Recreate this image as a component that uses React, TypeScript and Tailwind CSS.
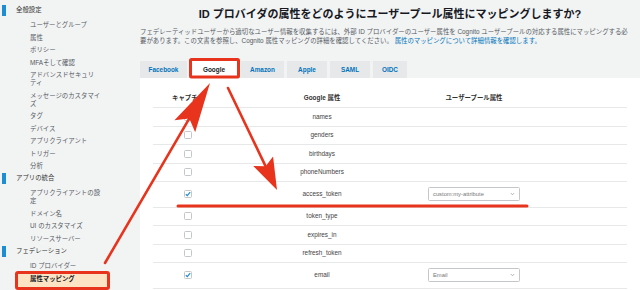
import { Fragment } from "react";

const RED = "#e8341c";

type Section = { title: string; items: { lines: string[]; active?: boolean }[] };

// Left navigation of the Cognito user pool console
const sections: Section[] = [
  {
    title: "全般設定",
    items: [
      { lines: ["ユーザーとグループ"] },
      { lines: ["属性"] },
      { lines: ["ポリシー"] },
      { lines: ["MFAそして確認"] },
      { lines: ["アドバンスドセキュリ", "ティ"] },
      { lines: ["メッセージのカスタマイ", "ズ"] },
      { lines: ["タグ"] },
      { lines: ["デバイス"] },
      { lines: ["アプリクライアント"] },
      { lines: ["トリガー"] },
      { lines: ["分析"] },
    ],
  },
  {
    title: "アプリの統合",
    items: [
      { lines: ["アプリクライアントの設", "定"] },
      { lines: ["ドメイン名"] },
      { lines: ["UI のカスタマイズ"] },
      { lines: ["リソースサーバー"] },
    ],
  },
  {
    title: "フェデレーション",
    items: [{ lines: ["ID プロバイダー"] }, { lines: ["属性マッピング"], active: true }],
  },
];

const tabs = [
  { label: "Facebook", w: "w-[47px]" },
  { label: "Google", w: "w-[48px]", active: true },
  { label: "Amazon", w: "w-[43px]" },
  { label: "Apple", w: "w-[40px]" },
  { label: "SAML", w: "w-[40px]" },
  { label: "OIDC", w: "w-[34px]" },
];

type Row = { name: string; checked?: boolean; mapped?: string };

const rows: Row[] = [
  { name: "names" },
  { name: "genders" },
  { name: "birthdays" },
  { name: "phoneNumbers" },
  { name: "access_token", checked: true, mapped: "custom:my-attribute" },
  { name: "token_type" },
  { name: "expires_in" },
  { name: "refresh_token" },
  { name: "email", checked: true, mapped: "Email" },
];

function Sidebar() {
  return (
    <aside className="w-[130px] shrink-0 pt-[4px]">
      {sections.map((s) => (
        <div key={s.title}>
          <div className="relative h-[12px] flex items-center pl-[16px] text-[6.4px] text-[#333]">
            <span className="absolute left-[2px] top-[0.5px] w-[4px] h-[11px] bg-[#1f8dd6]" />
            {s.title}
          </div>
          <div className="mt-[2.75px]">
            {s.items.map((it) =>
              it.active ? (
                <div
                  key={it.lines[0]}
                  className="ml-[16px] w-[93px] pl-[14px] pt-[2.25px] pb-[6px] leading-[8px] text-[6.4px] font-bold text-[#16191f] bg-[#fce3c3]"
                >
                  {it.lines[0]}
                </div>
              ) : (
                <div
                  key={it.lines[0]}
                  className="pl-[30px] py-[2.25px] leading-[8px] text-[6.4px] text-[#545b64]"
                >
                  {it.lines.map((l, i) => (
                    <Fragment key={i}>
                      {i > 0 && <br />}
                      {l}
                    </Fragment>
                  ))}
                </div>
              )
            )}
          </div>
        </div>
      ))}
    </aside>
  );
}

function Checkbox({ checked }: { checked?: boolean }) {
  return (
    <span className="w-[8px] h-[8px] rounded-[1.5px] border border-[#c4c7ca] bg-white flex items-center justify-center">
      {checked && (
        <svg width="6" height="6" viewBox="0 0 6 6">
          <polyline points="0.8,3.2 2.3,4.6 5.2,1.2" fill="none" stroke="#1f8dd6" strokeWidth="1.2" />
        </svg>
      )}
    </span>
  );
}

function Select({ value }: { value: string }) {
  return (
    <div className="w-[92px] h-[14px] border border-[#c4c7ca] rounded-[1.5px] bg-white flex items-center justify-between pl-[4px] pr-[4px] text-[5.8px] text-[#777]">
      <span>{value}</span>
      <svg width="5" height="4" viewBox="0 0 5 4">
        <polyline points="0.8,1 2.5,2.8 4.2,1" fill="none" stroke="#999" strokeWidth="0.7" />
      </svg>
    </div>
  );
}

function MappingTable() {
  return (
    <div className="flex-1 bg-white pt-[11.5px] px-[13px]">
      <div className="flex h-[18.5px] items-center border-b border-[#e6e8ea] text-[6.4px] font-bold text-[#333]">
        <div className="w-[70px] text-center">キャプチャ</div>
        <div className="w-[198px] text-center">Google 属性</div>
        <div className="w-[106px] text-center">ユーザープール属性</div>
        <div className="flex-1" />
      </div>
      {rows.map((r) => (
        <div
          key={r.name}
          className={`flex items-center border-b border-[#e6e8ea] text-[6.4px] text-[#444] ${
            r.mapped ? "h-[25.5px]" : "h-[18.5px]"
          }`}
        >
          <div className="w-[70px] flex justify-center">
            <Checkbox checked={r.checked} />
          </div>
          <div className="w-[198px] text-center">{r.name}</div>
          <div className="w-[106px] flex justify-center">{r.mapped && <Select value={r.mapped} />}</div>
          <div className="flex-1" />
        </div>
      ))}
    </div>
  );
}

function Arrow({ x1, y1, x2, y2, len, wid }: { x1: number; y1: number; x2: number; y2: number; len: number; wid: number }) {
  const dx = x2 - x1;
  const dy = y2 - y1;
  const d = Math.hypot(dx, dy);
  const ux = dx / d;
  const uy = dy / d;
  const bx = x2 - ux * len;
  const by = y2 - uy * len;
  const px = -uy * (wid / 2);
  const py = ux * (wid / 2);
  const nx = x2 - ux * len * 0.82;
  const ny = y2 - uy * len * 0.82;
  return (
    <g>
      <line x1={x1} y1={y1} x2={nx} y2={ny} stroke={RED} strokeWidth="2.6" strokeLinecap="round" />
      <polygon points={`${x2},${y2} ${bx + px},${by + py} ${nx},${ny} ${bx - px},${by - py}`} fill={RED} />
    </g>
  );
}

export default function App() {
  return (
    <div className="relative w-[640px] h-[290px] overflow-hidden flex bg-[#f2f3f3] font-['Liberation_Sans','Noto_Sans_CJK_JP',sans-serif]">
      <Sidebar />
      <main className="flex-1 min-w-0 flex flex-col pl-[10px]">
        <h1 className="pt-[7px] text-center text-[11px] leading-[14px] font-bold text-[#16191f]">
          ID プロバイダの属性をどのようにユーザープール属性にマッピングしますか?
        </h1>
        <p className="mt-[5.5px] pr-[8px] text-[6.4px] leading-[9px] text-[#545b64] whitespace-nowrap">
          フェデレーティッドユーザーから適切なユーザー情報を収集するには、外部 ID プロバイダーのユーザー属性を Cognito
          ユーザープールの対応する属性にマッピングする必
          <br />
          要があります。この文書を参照し、Cognito 属性マッピングの詳細を確認してください。{" "}
          <span className="text-[#0073bb]">属性のマッピングについて詳細情報を確認します。</span>
        </p>
        <div className="mt-[16.5px] flex gap-[3px]">
          {tabs.map((t) => (
            <div
              key={t.label}
              className={`${t.w} h-[17px] flex items-center justify-center text-[6.4px] font-bold ${
                t.active ? "bg-white text-[#16191f]" : "bg-[#e6e8ea] text-[#0073bb]"
              }`}
            >
              {t.label}
            </div>
          ))}
        </div>
        <MappingTable />
      </main>

      {/* annotation layer */}
      <svg className="absolute inset-0 pointer-events-none" width="640" height="290" viewBox="0 0 640 290">
        <rect x="16.5" y="272.5" width="92" height="16" rx="1.5" fill="none" stroke={RED} strokeWidth="3" />
        <rect x="190.5" y="59.5" width="48" height="17.5" rx="1" fill="none" stroke={RED} strokeWidth="3" />
        <line x1="178" y1="206" x2="527" y2="206" stroke={RED} strokeWidth="3" strokeLinecap="round" />
        <Arrow x1={105} y1={263} x2={210} y2={83} len={50} wid={24} />
        <Arrow x1={228} y1={88} x2={277} y2={190} len={32} wid={22} />
      </svg>
    </div>
  );
}
